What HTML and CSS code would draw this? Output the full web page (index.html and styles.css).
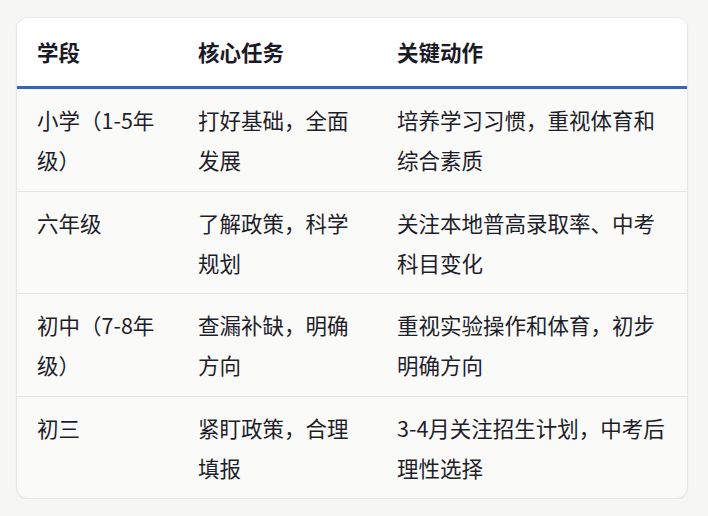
FILE: index.html
```html
<!DOCTYPE html>
<html lang="zh-CN">
<head>
<meta charset="utf-8">
<title>学段规划</title>
<link rel="stylesheet" href="styles.css">
</head>
<body>
<div class="card">
  <table class="plan">
    <colgroup>
      <col class="c1">
      <col class="c2">
      <col class="c3">
    </colgroup>
    <thead>
      <tr><th>学段</th><th>核心任务</th><th>关键动作</th></tr>
    </thead>
    <tbody>
      <tr><td>小学（1-5年级）</td><td>打好基础，全面发展</td><td>培养学习习惯，重视体育和综合素质</td></tr>
      <tr><td>六年级</td><td>了解政策，科学规划</td><td>关注本地普高录取率、中考科目变化</td></tr>
      <tr><td>初中（7-8年级）</td><td>查漏补缺，明确方向</td><td>重视实验操作和体育，初步明确方向</td></tr>
      <tr><td>初三</td><td>紧盯政策，合理填报</td><td>3-4月关注招生计划，中考后理性选择</td></tr>
    </tbody>
  </table>
</div>
</body>
</html>
```

FILE: styles.css
```css
html, body {
  margin: 0;
  padding: 0;
  background: #f6f6f5;
}
body {
  font-family: "Noto Sans CJK SC", "Noto Sans", sans-serif;
  color: #1e1e2a;
}
.card {
  width: 670px;
  margin: 17px 0 0 16px;
  border: 1px solid #e6e6e4;
  border-radius: 12px;
  background: #fafaf9;
  overflow: hidden;
  box-shadow: 0 1px 2px rgba(0, 0, 0, 0.05);
}
.plan {
  width: 670px;
  border-collapse: collapse;
  table-layout: fixed;
  font-size: 21.5px;
  line-height: 40px;
}
.c1 { width: 161px; }
.c2 { width: 199px; }
.c3 { width: 310px; }
.plan th {
  background: #ffffff;
  text-align: left;
  font-weight: 700;
  padding: 14px 20px;
  border-bottom: 3px solid #2f63cf;
  color: #1a1a28;
}
.plan td {
  padding: 11px 14px 10.5px 20px;
  vertical-align: top;
  border-bottom: 1px solid #e4e4e2;
}
.plan td:last-child {
  padding-right: 12px;
}
.plan tbody tr:last-child td {
  border-bottom: none;
}
```
